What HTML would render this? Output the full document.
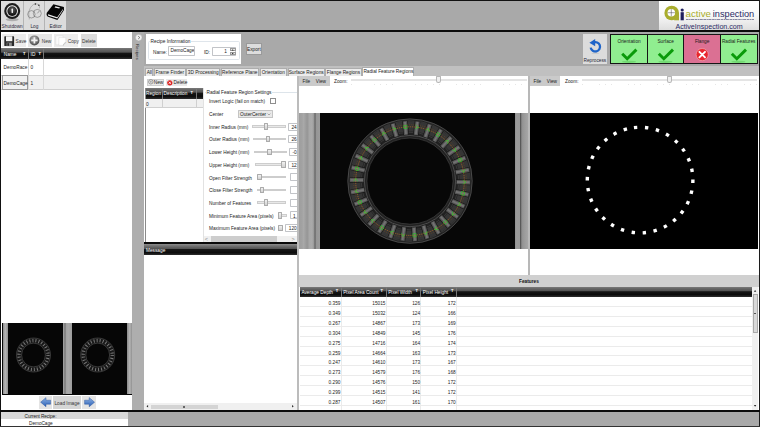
<!DOCTYPE html>
<html><head><meta charset="utf-8"><title>Recipe Editor</title>
<style>
*{box-sizing:border-box;margin:0;padding:0}
html,body{width:760px;height:427px;overflow:hidden;background:#a9a9a9}
body{position:relative;font-family:"Liberation Sans",sans-serif;font-size:4.75px;color:#1a1a1a;line-height:1.2}
div,span{position:absolute;white-space:nowrap}
.t{font-size:4.75px;line-height:6.4px;height:6.4px;margin-top:1px}
.btn{background:#dcdcdc}
.hdr{background:linear-gradient(#7a7a7a 0%,#626262 20%,#555 38%,#161616 47%,#0c0c0c 75%,#2e2e2e 100%);color:#fff}
.trk{height:2.5px;background:#e8e8e8;border:0.5px solid #cdcdcd}
.thm{width:4.6px;height:6.6px;background:linear-gradient(#f1f1f1,#d2d2d2);border:0.5px solid #ababab;border-radius:0.5px}
.tb{height:8px;background:#fff;border:0.5px solid #c2c4c8;border-radius:0.8px;font-size:4.75px;line-height:6.4px;overflow:hidden}
.tb span{left:2.4px;top:1.3px}
.tab{top:68.4px;height:7.6px;background:#ebebeb;border:0.5px solid #adadad;border-bottom:none;font-size:4.75px;line-height:7.6px;text-align:center}
.fr{position:relative;display:block;height:9.85px;border-bottom:0.5px solid #ebebeb;width:452px}
.fr span{top:0;height:9.85px;line-height:14.4px;text-align:right;padding-right:0.2px;border-right:0.5px solid #ebebeb}
.c1{left:0;width:41.6px}.c2{left:41.6px;width:45px}.c3{left:86.6px;width:34.6px}.c4{left:121.2px;width:35.6px}
.fh{top:0;height:10.4px;line-height:12.4px;color:#fff;font-size:4.75px;border-right:0.5px solid #777;padding-left:1.3px}
.flt{font-size:4px;font-weight:bold}
</style></head><body>

<!-- top toolbar -->
<div style="left:0;top:0;width:760px;height:1.2px;background:#111"></div>
<div style="left:0;top:0;width:1.2px;height:427px;background:#111"></div>
<div style="left:758.9px;top:0;width:1.1px;height:427px;background:#1c1c1c"></div>
<div class="btn" style="left:1.2px;top:1.2px;width:22px;height:29px"></div>
<div class="btn" style="left:24.4px;top:1.2px;width:20px;height:29px"></div>
<div class="btn" style="left:45.3px;top:1.2px;width:20.8px;height:29px"></div>
<div style="left:23.2px;top:1.2px;width:1.2px;height:29px;background:#b4b4b4"></div>
<div style="left:44.4px;top:1.2px;width:0.9px;height:29px;background:#b4b4b4"></div>
<!-- shutdown icon -->
<svg style="position:absolute;left:2px;top:1.5px" width="21" height="21" viewBox="0 0 21 21">
<defs><radialGradient id="g1" cx="50%" cy="35%" r="65%"><stop offset="0" stop-color="#666"/><stop offset="1" stop-color="#050505"/></radialGradient>
<linearGradient id="g2" x1="0" y1="0" x2="0" y2="1"><stop offset="0" stop-color="#fff"/><stop offset="1" stop-color="#bbb"/></linearGradient></defs>
<ellipse cx="10.2" cy="17.6" rx="6.5" ry="1.6" fill="#9a9a9a" opacity="0.7"/>
<circle cx="10.2" cy="9.1" r="8" fill="#1c1c1c"/>
<circle cx="10.2" cy="9.1" r="5.9" fill="url(#g2)"/>
<circle cx="10.2" cy="9.1" r="4.8" fill="url(#g1)"/>
<rect x="9.6" y="6.6" width="1.3" height="4.4" rx="0.6" fill="#fff"/>
</svg>
<div class="t" style="left:1.2px;top:22.8px;width:22px;text-align:center;color:#2a2a3a">Shutdown</div>
<!-- log icon -->
<svg style="position:absolute;left:25px;top:1.5px" width="19" height="21" viewBox="0 0 19 21" fill="none" stroke="#5a5a5a" stroke-width="0.5">
<circle cx="6.4" cy="12.3" r="3.7"/><circle cx="12.3" cy="11.4" r="4"/>
<path d="M4.4 16.2 C3 12 4 5.4 8.4 2.6 C10.4 1.4 13 1.8 14 3.2 C14.8 4.4 14.6 5.6 14.2 6.4" stroke="#8a8a8a" stroke-width="0.55"/>
<path d="M4.4 16.2 L4.2 17.4" stroke="#aaa" stroke-width="0.9"/>
<circle cx="10.4" cy="2.1" r="0.75" fill="#2a2a2a" stroke="none"/><circle cx="13.9" cy="3.3" r="0.75" fill="#2a2a2a" stroke="none"/>
<path d="M12.3 11.4 L14.4 9" stroke="#555"/>
</svg>
<div class="t" style="left:24.4px;top:22.8px;width:20px;text-align:center;color:#2a2a3a">Log</div>
<!-- editor icon -->
<svg style="position:absolute;left:46px;top:2.5px" width="19" height="18" viewBox="0 0 19 18">
<path d="M1 9.6 L7.4 1.3 L17.9 3.9 L18 7 L11.4 16.9 L2 13.8 C0.4 13.1 0.2 11 1 9.6 Z" fill="#050505"/>
<path d="M2.2 11.3 L11.2 14.3 L17 6 L17 7 L11.3 15.6 L2.4 12.7 C1.8 12.3 1.8 11.7 2.2 11.3 Z" fill="#ededed"/>
<path d="M9.4 3.3 L14 4.5 L13.2 5.6 L8.6 4.4 Z" fill="#f2f2f2"/>
</svg>
<div class="t" style="left:45.3px;top:22.8px;width:20.8px;text-align:center;color:#2a2a3a">Editor</div>

<!-- logo -->
<div style="left:659px;top:1.2px;width:99.8px;height:29.2px;background:linear-gradient(#ffffff 0%,#fafafa 45%,#dedede 100%)"></div>
<svg style="position:absolute;left:659px;top:1.2px" width="99" height="29" viewBox="0 0 99 29">
<circle cx="12.7" cy="12" r="7.3" fill="#a9ad2d"/>
<rect x="15.2" y="12" width="4.8" height="7.3" fill="#a9ad2d"/>
<circle cx="12.3" cy="11.7" r="3.8" fill="#fff"/>
<path d="M12.3 8.1 V15.3 M8.7 11.7 H15.9" stroke="#333" stroke-width="0.45"/>
<circle cx="23.2" cy="9" r="1.6" fill="#1e1f5e"/>
<rect x="21.6" y="11.2" width="3.2" height="8.1" fill="#1e1f5e"/>
<text x="26.6" y="15.7" font-family="Liberation Sans, sans-serif" font-size="9.4" fill="#a9ad2d" textLength="25.4" lengthAdjust="spacingAndGlyphs">active</text>
<text x="53.8" y="15.7" font-family="Liberation Sans, sans-serif" font-size="9.4" fill="#2b2c66" textLength="41.4" lengthAdjust="spacingAndGlyphs">inspection</text>
<path d="M27 18.5 H95" stroke="#4b4c74" stroke-width="0.8" stroke-dasharray="2.6 0.5 1.4 0.4 3.2 0.6" opacity="0.8"/>
<text x="16.4" y="28.2" font-family="Liberation Sans, sans-serif" font-size="7.4" fill="#2b2c66" textLength="67.4" lengthAdjust="spacingAndGlyphs">ActiveInspection.com</text>
</svg>

<!-- black line under toolbar -->
<div style="left:0;top:30.3px;width:760px;height:1.9px;background:#0c0c0c"></div>

<!-- left panel -->
<div style="left:1.2px;top:32.2px;width:131.1px;height:377.6px;background:#fff"></div>
<div class="btn" style="left:2.2px;top:33.8px;width:24px;height:13.4px;background:#ececec"></div>
<div class="btn" style="left:28px;top:33.8px;width:23.6px;height:13.4px;background:#e6e6e6"></div>
<div class="btn" style="left:54px;top:33.8px;width:24.4px;height:13.4px;background:#ececec"></div>
<div class="btn" style="left:80.8px;top:33.8px;width:16.2px;height:13.4px;background:#dcdcdc"></div>
<!-- save icon -->
<svg style="position:absolute;left:4.1px;top:35.6px" width="11" height="11" viewBox="0 0 11 11">
<rect x="0.3" y="0.3" width="9.8" height="9.8" rx="0.6" fill="#2b2b2b"/><rect x="2" y="0.3" width="6.3" height="4.9" fill="#f4f4f4"/><rect x="2.6" y="6.6" width="5.2" height="3.5" fill="#8a8a8a"/><rect x="3.4" y="7.2" width="1.5" height="2.6" fill="#222"/>
</svg>
<div class="t" style="left:15.6px;top:37.6px;color:#333">Save</div>
<svg style="position:absolute;left:29.4px;top:35.4px" width="11" height="11" viewBox="0 0 11 11">
<defs><radialGradient id="g3" cx="45%" cy="35%" r="65%"><stop offset="0" stop-color="#bbb"/><stop offset="1" stop-color="#4a4a4a"/></radialGradient></defs>
<circle cx="5.4" cy="5.4" r="5" fill="url(#g3)"/><path d="M5.4 2.2 V8.6 M2.2 5.4 H8.6" stroke="#f2f2f2" stroke-width="1.7"/>
</svg>
<div class="t" style="left:41.8px;top:37.6px;color:#333">New</div>
<svg style="position:absolute;left:55.4px;top:35.4px" width="12" height="11" viewBox="0 0 12 11">
<path d="M0.8 0.8 H8 V7 L5.4 9.8 H0.8 Z" fill="#fbfbfb" stroke="#d4d4d4" stroke-width="0.4"/><path d="M3.8 2.6 H10.8 V7.6 L8.4 10.4 H3.8 Z" fill="#fff" stroke="#cfcfcf" stroke-width="0.4"/><path d="M8.4 10.4 C8.6 9 9.4 7.8 10.8 7.6" stroke="#888" fill="none" stroke-width="0.5"/>
</svg>
<div class="t" style="left:67.8px;top:37.6px;color:#333">Copy</div>
<div class="t" style="left:80.8px;top:37.6px;width:16.2px;text-align:center;color:#333">Delete</div>
<!-- grid -->
<div class="hdr" style="left:1.2px;top:47.8px;width:131.6px;height:11.4px"></div>
<div class="t" style="left:3.8px;top:51px;color:#fff">Name</div><div class="t flt" style="left:23px;top:49.6px;color:#fff">T</div>
<div class="t" style="left:30.6px;top:51px;color:#fff">ID</div><div class="t flt" style="left:38.4px;top:49.6px;color:#fff">T</div>
<div style="left:28.2px;top:48.6px;width:0.5px;height:10.4px;background:#777"></div>
<div style="left:43.2px;top:48.6px;width:0.5px;height:10.4px;background:#777"></div>
<div style="left:1.2px;top:75px;width:131.6px;height:15.4px;background:#f0f0f0;border-top:0.5px solid #d0d0d0;border-bottom:0.5px solid #d0d0d0"></div>
<div style="left:2.4px;top:75.4px;width:25.4px;height:14.6px;border:0.5px solid #9a9a9a"></div>
<div style="left:28.2px;top:59.2px;width:0.5px;height:31.2px;background:#d8d8d8"></div>
<div style="left:43.2px;top:59.2px;width:0.5px;height:31.2px;background:#d8d8d8"></div>
<div class="t" style="left:3.6px;top:64.2px">DemoRace</div><div class="t" style="left:30.4px;top:64.2px">0</div>
<div class="t" style="left:3.6px;top:79.8px">DemoCage</div><div class="t" style="left:30.4px;top:79.8px">1</div>

<!-- thumbnails -->
<div style="left:1.6px;top:322.8px;width:131.2px;height:71.8px;background:#060606"></div>
<div style="left:2.6px;top:323.4px;width:5.8px;height:71px;background:linear-gradient(90deg,#8a8a8a,#b5b5b5 45%,#8f8f8f)"></div>
<div style="left:63.3px;top:323.4px;width:8.9px;height:71px;background:linear-gradient(90deg,#9a9a9a 0%,#a0a0a0 12%,#7c7c7c 18%,#7c7c7c 26%,#a2a2a2 34%,#a8a8a8 60%,#9c9c9c 100%)"></div>
<div style="left:126.9px;top:323.4px;width:5.3px;height:71px;background:linear-gradient(90deg,#8a8a8a,#b5b5b5 55%,#909090)"></div>
<svg style="position:absolute;left:0;top:322.8px" width="133" height="72" viewBox="0 322.8 133 72">
<circle cx="33.5" cy="354.8" r="14.4" fill="none" stroke="#171717" stroke-width="5.2"/>
<circle cx="33.5" cy="354.8" r="14.5" fill="none" stroke="#787878" stroke-width="3.3" stroke-dasharray="1.0 2.037"/>
<circle cx="33.5" cy="354.8" r="17" fill="none" stroke="#6c6c6c" stroke-width="0.45"/>
<circle cx="33.5" cy="354.8" r="11.9" fill="none" stroke="#6c6c6c" stroke-width="0.45"/>
<circle cx="97.7" cy="354.8" r="14.4" fill="none" stroke="#171717" stroke-width="5.2"/>
<circle cx="97.7" cy="354.8" r="14.5" fill="none" stroke="#787878" stroke-width="3.3" stroke-dasharray="1.0 2.037"/>
<circle cx="97.7" cy="354.8" r="17" fill="none" stroke="#6c6c6c" stroke-width="0.45"/>
<circle cx="97.7" cy="354.8" r="11.9" fill="none" stroke="#6c6c6c" stroke-width="0.45"/>
</svg>
<!-- load image -->
<div class="btn" style="left:38.6px;top:396.2px;width:13.4px;height:12.4px;background:#e4e4e4"></div>
<div class="btn" style="left:53px;top:396.2px;width:28px;height:12.4px;background:#d6d6d6"></div>
<div class="btn" style="left:82.4px;top:396.2px;width:13.4px;height:12.4px;background:#e4e4e4"></div>
<div class="t" style="left:53px;top:400.2px;width:28px;text-align:center;color:#333">Load Image</div>
<svg style="position:absolute;left:38.6px;top:396.2px" width="57.2" height="12.4" viewBox="0 0 57.2 12.4">
<defs><linearGradient id="ga" x1="0" y1="0" x2="0" y2="1"><stop offset="0" stop-color="#8fb4e6"/><stop offset="1" stop-color="#2a5fb4"/></linearGradient></defs>
<path d="M1.6 6.2 L7 1.6 V4.2 H11.6 V8.2 H7 V10.8 Z" fill="url(#ga)" stroke="#1a4796" stroke-width="0.4"/>
<path d="M55.6 6.2 L50.2 1.6 V4.2 H45.6 V8.2 H50.2 V10.8 Z" fill="url(#ga)" stroke="#1a4796" stroke-width="0.4"/>
</svg>

<!-- bottom -->
<div style="left:0;top:409.8px;width:760px;height:2px;background:#0c0c0c"></div>
<div style="left:1.2px;top:411.8px;width:126.8px;height:7px;background:#d9d9d9"></div>
<div style="left:1.2px;top:418.8px;width:126.8px;height:7.4px;background:#fff"></div>
<div style="left:0;top:426px;width:760px;height:1px;background:#333"></div>
<div class="t" style="left:24.6px;top:412.9px;color:#222;letter-spacing:-0.1px">Current Recipe:</div>
<div class="t" style="left:29px;top:419.7px;color:#222;letter-spacing:-0.05px">DemoCage</div>

<!-- splitter -->
<div style="left:132.3px;top:32.2px;width:11.9px;height:377.6px;background:#aeaeae"></div>
<svg style="position:absolute;left:134.6px;top:33.8px" width="8" height="8" viewBox="0 0 8 8"><circle cx="3.7" cy="3.6" r="3.3" fill="#f1f1f1" stroke="#9a9a9a" stroke-width="0.4"/><path d="M3.2 2.2 L4.8 3.6 L3.2 5" stroke="#444" stroke-width="0.7" fill="none"/></svg>
<div class="t" style="left:140.3px;top:42.8px;transform-origin:0 0;transform:rotate(90deg);color:#222;font-size:4.3px">Recipes</div>

<!-- recipe info -->
<div style="left:146.2px;top:34px;width:94.8px;height:29.8px;background:#fff"></div>
<div style="left:147.9px;top:41.4px;width:91.7px;height:18.4px;border:0.5px solid #dfe5eb;border-radius:1.6px"></div>
<div class="t" style="left:149.6px;top:38.2px;background:#fff;padding:0 1px">Recipe Information</div>
<div class="t" style="left:153px;top:48.6px">Name:</div>
<div class="tb" style="left:168.3px;top:46.2px;width:26.4px;height:10.2px"><span style="top:0.7px;left:1.3px;letter-spacing:-0.05px">DemoCage</span></div>
<div class="t" style="left:204px;top:48.6px">ID:</div>
<div class="tb" style="left:211.6px;top:47.4px;width:24.4px;height:8.2px"><span style="left:auto;right:8px;top:0.6px">1</span></div>
<div style="left:230.2px;top:47.8px;width:5.4px;height:3.6px;background:#e9e9e9;border:0.4px solid #9a9a9a"></div>
<div style="left:230.2px;top:51.6px;width:5.4px;height:3.6px;background:#e9e9e9;border:0.4px solid #9a9a9a"></div>
<svg style="position:absolute;left:230.2px;top:47.8px" width="5.4" height="7.4" viewBox="0 0 5.4 7.4"><path d="M1.7 2.5 L2.7 1.2 L3.7 2.5 Z M1.7 5 L2.7 6.3 L3.7 5 Z" fill="#222"/></svg>
<div style="left:245.6px;top:43.4px;width:16.6px;height:11.6px;background:#dddddd;border:0.5px solid #9a9a9a"></div>
<div class="t" style="left:245.6px;top:46px;width:16.6px;text-align:center">Export</div>

<!-- reprocess + status -->
<div class="btn" style="left:583px;top:34.4px;width:23.8px;height:29.4px"></div>
<svg style="position:absolute;left:586.6px;top:37.6px" width="16" height="16" viewBox="0 0 16 16"><path d="M6.4 4.5 A4.7 4.7 0 1 1 3.7 9.6" fill="none" stroke="#1f64c8" stroke-width="2.3"/><path d="M2.4 4.8 L8.2 1 L8.2 8.2 Z" fill="#1f64c8"/><ellipse cx="8.3" cy="15.3" rx="4" ry="0.5" fill="#c4c4c4"/></svg>
<div class="t" style="left:583px;top:57.4px;width:23.8px;text-align:center;color:#2a2a3a">Reprocess</div>
<div style="left:610px;top:33.8px;width:147.6px;height:30px;background:#161616"></div>
<div style="left:611px;top:34.7px;width:36px;height:28.2px;background:#90ee90"></div>
<div style="left:647.7px;top:34.7px;width:35.8px;height:28.2px;background:#90ee90"></div>
<div style="left:684.2px;top:34.7px;width:35.8px;height:28.2px;background:#db7093"></div>
<div style="left:720.7px;top:34.7px;width:36px;height:28.2px;background:#90ee90"></div>
<div class="t" style="left:611px;top:37.9px;width:36.2px;text-align:center">Orientation</div>
<div class="t" style="left:647.6px;top:37.9px;width:36.1px;text-align:center">Surface</div>
<div class="t" style="left:684.1px;top:37.9px;width:36.1px;text-align:center">Flange</div>
<div class="t" style="left:720.6px;top:37.9px;width:36.2px;text-align:center">Radial Features</div>
<svg style="position:absolute;left:610px;top:46px" width="148" height="18" viewBox="0 0 148 18">
<g fill="none" stroke="#0a9a0a" stroke-width="2.9"><path d="M12.2 7.8 L17.2 12.8 L26.4 3.6"/><path d="M48.8 7.8 L53.8 12.8 L63 3.6"/><path d="M121.8 7.8 L126.8 12.8 L136 3.6"/></g>
<g fill="#4fbf4f" opacity="0.45"><ellipse cx="19" cy="15.8" rx="7" ry="1.1"/><ellipse cx="55.4" cy="15.8" rx="7" ry="1.1"/><ellipse cx="128.4" cy="15.8" rx="7" ry="1.1"/></g>
<circle cx="92.2" cy="8.6" r="6.1" fill="#e8262e"/><circle cx="92.2" cy="8.6" r="6.1" fill="none" stroke="#f3a6b0" stroke-width="0.7"/>
<path d="M89.4 5.8 L95 11.4 M95 5.8 L89.4 11.4" stroke="#fff" stroke-width="1.9" stroke-linecap="round"/>
</svg>

<!-- tab strip -->
<div style="left:144.2px;top:65.7px;width:614.8px;height:10.3px;background:#c0c0c0"></div>
<div class="tab" style="left:145.4px;width:7.8px">All</div>
<div class="tab" style="left:153.8px;width:32px">Frame Finder</div>
<div class="tab" style="left:186.4px;width:33.6px">3D Processing</div>
<div class="tab" style="left:220.6px;width:38.4px">Reference Plane</div>
<div class="tab" style="left:259.6px;width:27.4px">Orientation</div>
<div class="tab" style="left:287.6px;width:37.2px">Surface Regions</div>
<div class="tab" style="left:325.4px;width:36.2px">Flange Regions</div>
<div class="tab" style="left:362.4px;width:51.8px;top:67.2px;height:9px;background:#fff;line-height:8.4px">Radial Feature Regions</div>

<!-- tab content background -->
<div style="left:144.2px;top:75.9px;width:614.8px;height:333.9px;background:#fff"></div>

<!-- region list -->
<div style="left:146.8px;top:78.6px;width:16.8px;height:7.1px;background:#e9e9e9;border:0.4px solid #cfcfcf"></div>
<div style="left:166.2px;top:78.6px;width:21px;height:7.1px;background:#e9e9e9"></div>
<svg style="position:absolute;left:147.6px;top:79.4px" width="6" height="6" viewBox="0 0 6 6"><circle cx="2.8" cy="2.8" r="2.2" fill="#f5f5f5" stroke="#555" stroke-width="0.55"/><path d="M2.8 1.5 V4.1 M1.5 2.8 H4.1" stroke="#777" stroke-width="0.5"/></svg>
<div class="t" style="left:153.8px;top:79.2px">New</div>
<svg style="position:absolute;left:167px;top:79.5px" width="6" height="6" viewBox="0 0 6 6"><circle cx="2.8" cy="2.8" r="2.6" fill="#dd2222"/><path d="M1.7 1.7 L3.9 3.9 M3.9 1.7 L1.7 3.9" stroke="#fff" stroke-width="0.8"/></svg>
<div class="t" style="left:173.6px;top:79.2px">Delete</div>
<div class="hdr" style="left:145px;top:88px;width:58px;height:11px"></div>
<div style="left:144.8px;top:88px;width:0.5px;height:154.4px;background:#8a8a8a"></div>
<div class="t" style="left:146px;top:90.4px;color:#fff">Region</div>
<div class="t" style="left:163.6px;top:90.4px;color:#fff">Description</div><div class="t flt" style="left:190.6px;top:89.2px;color:#fff">T</div>
<div style="left:162.4px;top:88.6px;width:0.5px;height:10px;background:#777"></div>
<div style="left:196.2px;top:88.6px;width:0.5px;height:10px;background:#777"></div>
<div style="left:145.4px;top:99px;width:57.6px;height:9.3px;background:#f0f0f0;border-bottom:0.5px solid #d0d0d0"></div>
<div style="left:162.4px;top:99px;width:0.5px;height:9.3px;background:#d0d0d0"></div>
<div style="left:196.2px;top:99px;width:0.5px;height:9.3px;background:#d0d0d0"></div>
<div class="t" style="left:146px;top:101px">0</div>
<div style="left:203px;top:88.2px;width:0.6px;height:154px;background:#e2e2e2"></div>

<!-- settings -->
<div style="left:205.4px;top:92.4px;width:92px;height:146px;border-top:0.5px solid #dde4ea"></div>
<div class="t" style="left:205.8px;top:88.8px;background:#fff;padding:0 0.8px;letter-spacing:-0.04px">Radial Feature Region Settings</div>
<div class="t" style="left:209px;top:98.3px">Invert Logic (fail on match)</div>
<div style="left:270px;top:97.8px;width:6.2px;height:6.2px;background:#fff;border:0.5px solid #8e8e8e"></div>
<div class="t" style="left:209px;top:110.8px">Center</div>
<div style="left:237.7px;top:109.6px;width:35.6px;height:8.4px;background:#e9e9e9;border:0.5px solid #c4c4c4;border-radius:0.5px"></div>
<div class="t" style="left:240px;top:110.8px">OuterCenter</div>
<svg style="position:absolute;left:267.4px;top:112.6px" width="4" height="3" viewBox="0 0 4 3"><path d="M0.6 0.6 L2 2 L3.4 0.6" fill="none" stroke="#666" stroke-width="0.5"/></svg>
<div class="t" style="left:209px;top:123.7px">Inner Radius (mm)</div><div class="trk" style="left:252.2px;top:125.1px;width:33.8px"></div><div class="thm" style="left:263.9px;top:123.1px"></div><div class="tb" style="left:288px;top:122.5px;width:11.0px"><span>24.</span></div><div class="t" style="left:209px;top:136.4px">Outer Radius (mm)</div><div class="trk" style="left:253.2px;top:137.8px;width:32.8px"></div><div class="thm" style="left:265.6px;top:135.8px"></div><div class="tb" style="left:288px;top:135.2px;width:11.0px"><span>26.</span></div><div class="t" style="left:209px;top:149.1px">Lower Height (mm)</div><div class="trk" style="left:254.2px;top:150.5px;width:32.4px"></div><div class="thm" style="left:267.4px;top:148.5px"></div><div class="tb" style="left:289px;top:147.9px;width:10.0px"><span>-0.</span></div><div class="t" style="left:209px;top:161.8px">Upper Height (mm)</div><div class="trk" style="left:255px;top:163.2px;width:31.0px"></div><div class="thm" style="left:281.4px;top:161.2px"></div><div class="tb" style="left:288px;top:160.6px;width:11.0px"><span>12.</span></div><div class="t" style="left:209px;top:174.5px">Open Filter Strength</div><div class="trk" style="left:256.5px;top:175.9px;width:29.5px"></div><div class="thm" style="left:257.2px;top:173.9px"></div><div class="tb" style="left:289.5px;top:173.3px;width:9.5px"><span></span></div><div class="t" style="left:209px;top:187.2px">Close Filter Strength</div><div class="trk" style="left:256.5px;top:188.6px;width:29.5px"></div><div class="thm" style="left:259.7px;top:186.6px"></div><div class="tb" style="left:289.5px;top:186.0px;width:9.5px"><span></span></div><div class="t" style="left:209px;top:199.9px">Number of Features</div><div class="trk" style="left:256.5px;top:201.3px;width:29.5px"></div><div class="thm" style="left:263.5px;top:199.3px"></div><div class="tb" style="left:289.5px;top:198.7px;width:9.5px"><span></span></div><div class="t" style="left:209px;top:212.6px">Minimum Feature Area (pixels)</div><div class="trk" style="left:277.5px;top:214.0px;width:9.5px"></div><div class="thm" style="left:277.7px;top:212.0px"></div><div class="tb" style="left:289.6px;top:211.4px;width:9.4px"><span>1,</span></div><div class="t" style="left:209px;top:225.3px">Maximum Feature Area (pixels)</div><div class="trk" style="left:279px;top:226.7px;width:4.0px"></div><div class="thm" style="left:278.1px;top:224.7px"></div><div class="tb" style="left:285.4px;top:224.1px;width:13.6px"><span>120,</span></div>
<!-- settings h-scrollbar -->
<div style="left:203.6px;top:236px;width:93.4px;height:6.4px;background:#f0f0f0"></div>
<div style="left:210.6px;top:236px;width:66.4px;height:6.4px;background:#cdcdcd"></div>
<div class="t" style="left:204.8px;top:235.2px;font-size:5.6px;color:#8a8a8a">&lt;</div>
<div class="t" style="left:291.6px;top:235.2px;font-size:5.6px;color:#8a8a8a">&gt;</div>

<!-- message panel -->
<div style="left:144.4px;top:242.4px;width:152.6px;height:2.2px;background:#0a0a0a"></div>
<div class="hdr" style="left:144.4px;top:244.4px;width:152.6px;height:11px;background:linear-gradient(#8c8c8c 0%,#686868 25%,#555 42%,#161616 50%,#0c0c0c 80%,#2e2e2e 100%)"></div>
<div class="t" style="left:146px;top:246.8px;color:#fff">Message</div>
<div style="left:144.4px;top:403.4px;width:152.8px;height:6.4px;background:#f0f0f0"></div>
<div style="left:150.6px;top:404.6px;width:67px;height:4px;background:#d4d4d4"></div>
<div style="left:183.4px;top:405.8px;width:1.6px;height:1.8px;background:#666"></div>
<svg style="position:absolute;left:144.4px;top:403.4px" width="152.8" height="6.4" viewBox="0 0 152.8 6.4"><path d="M4 2 L2.4 3.2 L4 4.4 Z M148.2 2 L149.8 3.2 L148.2 4.4 Z" fill="#222"/></svg>

<!-- vertical splitter between left column and viewers -->
<div style="left:296.9px;top:75.9px;width:2.2px;height:333.9px;background:#bcbcbc"></div>

<!-- left viewer -->
<div style="left:299.1px;top:75.9px;width:30.5px;height:10.3px;background:#cacaca"></div>
<div class="t" style="left:302.6px;top:78.4px">File</div>
<div class="t" style="left:315.8px;top:78.4px">View</div>
<div class="t" style="left:334px;top:78.4px">Zoom:</div>
<div style="left:351px;top:78.9px;width:176px;height:1.3px;background:#f1f1f1;border:0.4px solid #e4e4e4"></div>
<div style="left:351px;top:84.2px;width:176px;height:0.8px;background:repeating-linear-gradient(90deg,#e6e6e6 0 0.6px,transparent 0.6px 5.86px)"></div>
<div style="left:436.4px;top:76.3px;width:4.4px;height:6.4px;background:#f0f0f0;border:0.5px solid #b6b6b6;border-radius:0.4px 0.4px 2.2px 2.2px"></div>
<!-- left image -->
<div style="left:299px;top:112.7px;width:229px;height:136.1px;background:#070707;overflow:hidden">
<div style="left:0;top:0;width:21px;height:136.1px;background:linear-gradient(90deg,#9e9e9e 0%,#a2a2a2 14%,#a9a9a9 22%,#9a9a9a 35%,#979797 40%,#a8a8a8 50%,#aaaaaa 62%,#9c9c9c 69%,#7a7a7a 72%,#767676 79%,#959595 82%,#9b9b9b 100%)"></div>
<div style="left:215.5px;top:0;width:13.5px;height:136.1px;background:linear-gradient(90deg,#8e8e8e 0%,#9a9a9a 10%,#999 38%,#5a5a5a 41%,#555 47%,#8f8f8f 51%,#9a9a9a 70%,#a6a6a6 100%)"></div>
<svg style="position:absolute;left:0;top:0" width="229" height="136.8" viewBox="0 0 229 136.8">
<circle cx="111.0" cy="68.1" r="52.7" fill="none" stroke="#212121" stroke-width="19.4"/>
<circle cx="111.0" cy="68.1" r="54.6" fill="none" stroke="#353535" stroke-width="10"/>
<circle cx="111.0" cy="68.1" r="62.2" fill="none" stroke="#6a6a6a" stroke-width="0.55"/>
<circle cx="111.0" cy="68.1" r="60.3" fill="none" stroke="#4c4c4c" stroke-width="0.5"/>
<circle cx="111.0" cy="68.1" r="48.8" fill="none" stroke="#505050" stroke-width="0.5"/>
<circle cx="111.0" cy="68.1" r="45.6" fill="none" stroke="#5e5e5e" stroke-width="0.7"/>
<circle cx="111.0" cy="68.1" r="43.1" fill="none" stroke="#474747" stroke-width="0.6"/>
<g transform="rotate(-4.8 111.0 68.1)"><rect x="108.2" y="7.699999999999996" width="5.6" height="14.2" fill="#181818"/><rect x="108.9" y="7.999999999999993" width="4.2" height="13.6" fill="#555"/><rect x="110.0" y="8.499999999999993" width="1.9" height="12.6" fill="#727272"/></g>
<g transform="rotate(7.2 111.0 68.1)"><rect x="108.2" y="7.699999999999996" width="5.6" height="14.2" fill="#181818"/><rect x="108.9" y="7.999999999999993" width="4.2" height="13.6" fill="#555"/><rect x="110.0" y="8.499999999999993" width="1.9" height="12.6" fill="#727272"/></g>
<g transform="rotate(19.2 111.0 68.1)"><rect x="108.2" y="7.699999999999996" width="5.6" height="14.2" fill="#181818"/><rect x="108.9" y="7.999999999999993" width="4.2" height="13.6" fill="#555"/><rect x="110.0" y="8.499999999999993" width="1.9" height="12.6" fill="#727272"/></g>
<g transform="rotate(31.2 111.0 68.1)"><rect x="108.2" y="7.699999999999996" width="5.6" height="14.2" fill="#181818"/><rect x="108.9" y="7.999999999999993" width="4.2" height="13.6" fill="#555"/><rect x="110.0" y="8.499999999999993" width="1.9" height="12.6" fill="#727272"/></g>
<g transform="rotate(43.2 111.0 68.1)"><rect x="108.2" y="7.699999999999996" width="5.6" height="14.2" fill="#181818"/><rect x="108.9" y="7.999999999999993" width="4.2" height="13.6" fill="#555"/><rect x="110.0" y="8.499999999999993" width="1.9" height="12.6" fill="#727272"/></g>
<g transform="rotate(55.2 111.0 68.1)"><rect x="108.2" y="7.699999999999996" width="5.6" height="14.2" fill="#181818"/><rect x="108.9" y="7.999999999999993" width="4.2" height="13.6" fill="#555"/><rect x="110.0" y="8.499999999999993" width="1.9" height="12.6" fill="#727272"/></g>
<g transform="rotate(67.2 111.0 68.1)"><rect x="108.2" y="7.699999999999996" width="5.6" height="14.2" fill="#181818"/><rect x="108.9" y="7.999999999999993" width="4.2" height="13.6" fill="#555"/><rect x="110.0" y="8.499999999999993" width="1.9" height="12.6" fill="#727272"/></g>
<g transform="rotate(79.2 111.0 68.1)"><rect x="108.2" y="7.699999999999996" width="5.6" height="14.2" fill="#181818"/><rect x="108.9" y="7.999999999999993" width="4.2" height="13.6" fill="#555"/><rect x="110.0" y="8.499999999999993" width="1.9" height="12.6" fill="#727272"/></g>
<g transform="rotate(91.2 111.0 68.1)"><rect x="108.2" y="7.699999999999996" width="5.6" height="14.2" fill="#181818"/><rect x="108.9" y="7.999999999999993" width="4.2" height="13.6" fill="#555"/><rect x="110.0" y="8.499999999999993" width="1.9" height="12.6" fill="#727272"/></g>
<g transform="rotate(103.2 111.0 68.1)"><rect x="108.2" y="7.699999999999996" width="5.6" height="14.2" fill="#181818"/><rect x="108.9" y="7.999999999999993" width="4.2" height="13.6" fill="#555"/><rect x="110.0" y="8.499999999999993" width="1.9" height="12.6" fill="#727272"/></g>
<g transform="rotate(115.2 111.0 68.1)"><rect x="108.2" y="7.699999999999996" width="5.6" height="14.2" fill="#181818"/><rect x="108.9" y="7.999999999999993" width="4.2" height="13.6" fill="#555"/><rect x="110.0" y="8.499999999999993" width="1.9" height="12.6" fill="#727272"/></g>
<g transform="rotate(127.2 111.0 68.1)"><rect x="108.2" y="7.699999999999996" width="5.6" height="14.2" fill="#181818"/><rect x="108.9" y="7.999999999999993" width="4.2" height="13.6" fill="#555"/><rect x="110.0" y="8.499999999999993" width="1.9" height="12.6" fill="#727272"/></g>
<g transform="rotate(139.2 111.0 68.1)"><rect x="108.2" y="7.699999999999996" width="5.6" height="14.2" fill="#181818"/><rect x="108.9" y="7.999999999999993" width="4.2" height="13.6" fill="#555"/><rect x="110.0" y="8.499999999999993" width="1.9" height="12.6" fill="#727272"/></g>
<g transform="rotate(151.2 111.0 68.1)"><rect x="108.2" y="7.699999999999996" width="5.6" height="14.2" fill="#181818"/><rect x="108.9" y="7.999999999999993" width="4.2" height="13.6" fill="#555"/><rect x="110.0" y="8.499999999999993" width="1.9" height="12.6" fill="#727272"/></g>
<g transform="rotate(163.2 111.0 68.1)"><rect x="108.2" y="7.699999999999996" width="5.6" height="14.2" fill="#181818"/><rect x="108.9" y="7.999999999999993" width="4.2" height="13.6" fill="#555"/><rect x="110.0" y="8.499999999999993" width="1.9" height="12.6" fill="#727272"/></g>
<g transform="rotate(175.2 111.0 68.1)"><rect x="108.2" y="7.699999999999996" width="5.6" height="14.2" fill="#181818"/><rect x="108.9" y="7.999999999999993" width="4.2" height="13.6" fill="#555"/><rect x="110.0" y="8.499999999999993" width="1.9" height="12.6" fill="#727272"/></g>
<g transform="rotate(187.2 111.0 68.1)"><rect x="108.2" y="7.699999999999996" width="5.6" height="14.2" fill="#181818"/><rect x="108.9" y="7.999999999999993" width="4.2" height="13.6" fill="#555"/><rect x="110.0" y="8.499999999999993" width="1.9" height="12.6" fill="#727272"/></g>
<g transform="rotate(199.2 111.0 68.1)"><rect x="108.2" y="7.699999999999996" width="5.6" height="14.2" fill="#181818"/><rect x="108.9" y="7.999999999999993" width="4.2" height="13.6" fill="#555"/><rect x="110.0" y="8.499999999999993" width="1.9" height="12.6" fill="#727272"/></g>
<g transform="rotate(211.2 111.0 68.1)"><rect x="108.2" y="7.699999999999996" width="5.6" height="14.2" fill="#181818"/><rect x="108.9" y="7.999999999999993" width="4.2" height="13.6" fill="#555"/><rect x="110.0" y="8.499999999999993" width="1.9" height="12.6" fill="#727272"/></g>
<g transform="rotate(223.2 111.0 68.1)"><rect x="108.2" y="7.699999999999996" width="5.6" height="14.2" fill="#181818"/><rect x="108.9" y="7.999999999999993" width="4.2" height="13.6" fill="#555"/><rect x="110.0" y="8.499999999999993" width="1.9" height="12.6" fill="#727272"/></g>
<g transform="rotate(235.2 111.0 68.1)"><rect x="108.2" y="7.699999999999996" width="5.6" height="14.2" fill="#181818"/><rect x="108.9" y="7.999999999999993" width="4.2" height="13.6" fill="#555"/><rect x="110.0" y="8.499999999999993" width="1.9" height="12.6" fill="#727272"/></g>
<g transform="rotate(247.2 111.0 68.1)"><rect x="108.2" y="7.699999999999996" width="5.6" height="14.2" fill="#181818"/><rect x="108.9" y="7.999999999999993" width="4.2" height="13.6" fill="#555"/><rect x="110.0" y="8.499999999999993" width="1.9" height="12.6" fill="#727272"/></g>
<g transform="rotate(259.2 111.0 68.1)"><rect x="108.2" y="7.699999999999996" width="5.6" height="14.2" fill="#181818"/><rect x="108.9" y="7.999999999999993" width="4.2" height="13.6" fill="#555"/><rect x="110.0" y="8.499999999999993" width="1.9" height="12.6" fill="#727272"/></g>
<g transform="rotate(271.2 111.0 68.1)"><rect x="108.2" y="7.699999999999996" width="5.6" height="14.2" fill="#181818"/><rect x="108.9" y="7.999999999999993" width="4.2" height="13.6" fill="#555"/><rect x="110.0" y="8.499999999999993" width="1.9" height="12.6" fill="#727272"/></g>
<g transform="rotate(283.2 111.0 68.1)"><rect x="108.2" y="7.699999999999996" width="5.6" height="14.2" fill="#181818"/><rect x="108.9" y="7.999999999999993" width="4.2" height="13.6" fill="#555"/><rect x="110.0" y="8.499999999999993" width="1.9" height="12.6" fill="#727272"/></g>
<g transform="rotate(295.2 111.0 68.1)"><rect x="108.2" y="7.699999999999996" width="5.6" height="14.2" fill="#181818"/><rect x="108.9" y="7.999999999999993" width="4.2" height="13.6" fill="#555"/><rect x="110.0" y="8.499999999999993" width="1.9" height="12.6" fill="#727272"/></g>
<g transform="rotate(307.2 111.0 68.1)"><rect x="108.2" y="7.699999999999996" width="5.6" height="14.2" fill="#181818"/><rect x="108.9" y="7.999999999999993" width="4.2" height="13.6" fill="#555"/><rect x="110.0" y="8.499999999999993" width="1.9" height="12.6" fill="#727272"/></g>
<g transform="rotate(319.2 111.0 68.1)"><rect x="108.2" y="7.699999999999996" width="5.6" height="14.2" fill="#181818"/><rect x="108.9" y="7.999999999999993" width="4.2" height="13.6" fill="#555"/><rect x="110.0" y="8.499999999999993" width="1.9" height="12.6" fill="#727272"/></g>
<g transform="rotate(331.2 111.0 68.1)"><rect x="108.2" y="7.699999999999996" width="5.6" height="14.2" fill="#181818"/><rect x="108.9" y="7.999999999999993" width="4.2" height="13.6" fill="#555"/><rect x="110.0" y="8.499999999999993" width="1.9" height="12.6" fill="#727272"/></g>
<g transform="rotate(343.2 111.0 68.1)"><rect x="108.2" y="7.699999999999996" width="5.6" height="14.2" fill="#181818"/><rect x="108.9" y="7.999999999999993" width="4.2" height="13.6" fill="#555"/><rect x="110.0" y="8.499999999999993" width="1.9" height="12.6" fill="#727272"/></g>
<circle cx="111.0" cy="68.1" r="54.3" fill="none" stroke="#dc7c1c" stroke-width="0.55" stroke-dasharray="1.3 0.9"/>
<circle cx="111.0" cy="68.1" r="56.3" fill="none" stroke="#a85c10" stroke-width="0.35" stroke-dasharray="1 1.2"/>
<rect x="104.86" y="12.39" width="3.2" height="3.2" fill="none" stroke="#22d422" stroke-width="0.55" transform="rotate(-4.8 106.46 13.99)"/>
<path d="M115.91 15.73 L117.81 12.53 L119.71 15.73" fill="none" stroke="#22d422" stroke-width="0.55" transform="rotate(97.2 117.81 14.23)"/>
<path d="M126.96 18.32 L128.86 15.12 L130.76 18.32" fill="none" stroke="#22d422" stroke-width="0.55" transform="rotate(19.2 128.86 16.82)"/>
<rect x="137.53" y="20.05" width="3.2" height="3.2" fill="none" stroke="#22d422" stroke-width="0.55" transform="rotate(31.2 139.13 21.65)"/>
<path d="M146.27 30.02 L148.17 26.82 L150.07 30.02" fill="none" stroke="#22d422" stroke-width="0.55" transform="rotate(43.2 148.17 28.52)"/>
<path d="M153.69 38.61 L155.59 35.41 L157.49 38.61" fill="none" stroke="#22d422" stroke-width="0.55" transform="rotate(145.2 155.59 37.11)"/>
<rect x="159.46" y="45.46" width="3.2" height="3.2" fill="none" stroke="#22d422" stroke-width="0.55" transform="rotate(67.2 161.06 47.06)"/>
<path d="M162.44 59.43 L164.34 56.23 L166.24 59.43" fill="none" stroke="#22d422" stroke-width="0.55" transform="rotate(169.2 164.34 57.93)"/>
<path d="M163.39 70.74 L165.29 67.54 L167.19 70.74" fill="none" stroke="#22d422" stroke-width="0.55" transform="rotate(91.2 165.29 69.24)"/>
<rect x="162.27" y="78.90" width="3.2" height="3.2" fill="none" stroke="#22d422" stroke-width="0.55" transform="rotate(103.2 163.87 80.50)"/>
<path d="M158.23 92.72 L160.13 89.52 L162.03 92.72" fill="none" stroke="#22d422" stroke-width="0.55" transform="rotate(115.2 160.13 91.22)"/>
<path d="M152.35 102.43 L154.25 99.23 L156.15 102.43" fill="none" stroke="#22d422" stroke-width="0.55" transform="rotate(217.2 154.25 100.93)"/>
<rect x="144.88" y="107.60" width="3.2" height="3.2" fill="none" stroke="#22d422" stroke-width="0.55" transform="rotate(139.2 146.48 109.20)"/>
<path d="M135.26 117.18 L137.16 113.98 L139.06 117.18" fill="none" stroke="#22d422" stroke-width="0.55" transform="rotate(241.2 137.16 115.68)"/>
<path d="M124.79 121.58 L126.69 118.38 L128.59 121.58" fill="none" stroke="#22d422" stroke-width="0.55" transform="rotate(163.2 126.69 120.08)"/>
<rect x="113.94" y="120.61" width="3.2" height="3.2" fill="none" stroke="#22d422" stroke-width="0.55" transform="rotate(175.2 115.54 122.21)"/>
<path d="M102.29 123.47 L104.19 120.27 L106.09 123.47" fill="none" stroke="#22d422" stroke-width="0.55" transform="rotate(187.2 104.19 121.97)"/>
<path d="M91.24 120.88 L93.14 117.68 L95.04 120.88" fill="none" stroke="#22d422" stroke-width="0.55" transform="rotate(289.2 93.14 119.38)"/>
<rect x="81.27" y="112.95" width="3.2" height="3.2" fill="none" stroke="#22d422" stroke-width="0.55" transform="rotate(211.2 82.87 114.55)"/>
<path d="M71.93 109.18 L73.83 105.98 L75.73 109.18" fill="none" stroke="#22d422" stroke-width="0.55" transform="rotate(313.2 73.83 107.68)"/>
<path d="M64.51 100.59 L66.41 97.39 L68.31 100.59" fill="none" stroke="#22d422" stroke-width="0.55" transform="rotate(235.2 66.41 99.09)"/>
<rect x="59.34" y="87.54" width="3.2" height="3.2" fill="none" stroke="#22d422" stroke-width="0.55" transform="rotate(247.2 60.94 89.14)"/>
<path d="M55.76 79.77 L57.66 76.57 L59.56 79.77" fill="none" stroke="#22d422" stroke-width="0.55" transform="rotate(259.2 57.66 78.27)"/>
<path d="M54.81 68.46 L56.71 65.26 L58.61 68.46" fill="none" stroke="#22d422" stroke-width="0.55" transform="rotate(361.2 56.71 66.96)"/>
<rect x="56.53" y="54.10" width="3.2" height="3.2" fill="none" stroke="#22d422" stroke-width="0.55" transform="rotate(283.2 58.13 55.70)"/>
<path d="M59.97 46.48 L61.87 43.28 L63.77 46.48" fill="none" stroke="#22d422" stroke-width="0.55" transform="rotate(385.2 61.87 44.98)"/>
<path d="M65.85 36.77 L67.75 33.57 L69.65 36.77" fill="none" stroke="#22d422" stroke-width="0.55" transform="rotate(307.2 67.75 35.27)"/>
<rect x="73.92" y="25.40" width="3.2" height="3.2" fill="none" stroke="#22d422" stroke-width="0.55" transform="rotate(319.2 75.52 27.00)"/>
<path d="M82.94 22.02 L84.84 18.82 L86.74 22.02" fill="none" stroke="#22d422" stroke-width="0.55" transform="rotate(331.2 84.84 20.52)"/>
<path d="M93.41 17.62 L95.31 14.42 L97.21 17.62" fill="none" stroke="#22d422" stroke-width="0.55" transform="rotate(433.2 95.31 16.12)"/>
</svg>
</div>

<!-- middle splitter -->
<div style="left:528.1px;top:75.9px;width:1.9px;height:199.4px;background:#b8b8b8"></div>

<!-- right viewer -->
<div style="left:530px;top:75.9px;width:30.4px;height:10.3px;background:#cacaca"></div>
<div class="t" style="left:533.6px;top:78.4px">File</div>
<div class="t" style="left:546.8px;top:78.4px">View</div>
<div class="t" style="left:565px;top:78.4px">Zoom:</div>
<div style="left:582px;top:78.9px;width:175px;height:1.3px;background:#f1f1f1;border:0.4px solid #e4e4e4"></div>
<div style="left:582px;top:84.2px;width:175px;height:0.8px;background:repeating-linear-gradient(90deg,#e6e6e6 0 0.6px,transparent 0.6px 5.8px)"></div>
<div style="left:667.4px;top:76.3px;width:4.4px;height:6.4px;background:#f0f0f0;border:0.5px solid #b6b6b6;border-radius:0.4px 0.4px 2.2px 2.2px"></div>
<div style="left:530px;top:112.7px;width:228.4px;height:136.1px;background:#000"></div>
<svg style="position:absolute;left:530.6px;top:112.2px" width="227.8" height="137.2" viewBox="530.6 112.2 227.8 137.2">
<circle cx="639.7" cy="180.3" r="52.8" fill="none" stroke="#fff" stroke-width="3.4" stroke-dasharray="3.4 7.658" transform="rotate(-96.7 639.7 180.3)"/>
</svg>

<!-- features -->
<div style="left:299.1px;top:275.2px;width:459.6px;height:11.6px;background:#d0d0d0"></div>
<div class="t" style="left:299.6px;top:277.8px;width:458.8px;text-align:center;font-weight:bold;color:#111">Features</div>
<div class="hdr" style="left:300.1px;top:286.8px;width:452.3px;height:10.6px">
<span class="fh" style="left:0;width:41.8px">Average Depth<span class="flt" style="left:35.6px;top:-1.6px">T</span></span>
<span class="fh" style="left:41.8px;width:45px">Pixel Area Count<span class="flt" style="left:38.6px;top:-1.6px">T</span></span>
<span class="fh" style="left:86.8px;width:34.6px">Pixel Width<span class="flt" style="left:28.6px;top:-1.6px">T</span></span>
<span class="fh" style="left:121.4px;width:35.6px">Pixel Height<span class="flt" style="left:29.6px;top:-1.6px">T</span></span>
</div>
<div style="left:300.1px;top:297.4px;width:452.3px;height:112.4px;overflow:hidden;background:#fff"><div class="fr"><span class="c1">0.359</span><span class="c2">15015</span><span class="c3">126</span><span class="c4">172</span></div><div class="fr"><span class="c1">0.349</span><span class="c2">15032</span><span class="c3">124</span><span class="c4">166</span></div><div class="fr"><span class="c1">0.267</span><span class="c2">14867</span><span class="c3">173</span><span class="c4">169</span></div><div class="fr"><span class="c1">0.304</span><span class="c2">14849</span><span class="c3">145</span><span class="c4">176</span></div><div class="fr"><span class="c1">0.275</span><span class="c2">14716</span><span class="c3">164</span><span class="c4">174</span></div><div class="fr"><span class="c1">0.259</span><span class="c2">14664</span><span class="c3">163</span><span class="c4">173</span></div><div class="fr"><span class="c1">0.247</span><span class="c2">14610</span><span class="c3">173</span><span class="c4">167</span></div><div class="fr"><span class="c1">0.273</span><span class="c2">14579</span><span class="c3">176</span><span class="c4">168</span></div><div class="fr"><span class="c1">0.290</span><span class="c2">14576</span><span class="c3">150</span><span class="c4">172</span></div><div class="fr"><span class="c1">0.299</span><span class="c2">14515</span><span class="c3">141</span><span class="c4">172</span></div><div class="fr"><span class="c1">0.287</span><span class="c2">14507</span><span class="c3">161</span><span class="c4">170</span></div><div class="fr"><span class="c1"></span><span class="c2"></span><span class="c3"></span><span class="c4"></span></div></div>
<!-- v scrollbar -->
<div style="left:752.2px;top:287px;width:6.2px;height:122.8px;background:#f0f0f0"></div>
<div style="left:753px;top:294px;width:4.6px;height:39px;background:#d8d8d8;border:0.4px solid #a8a8a8"></div>
<div style="left:754.4px;top:312.6px;width:1.8px;height:1.6px;background:#555"></div>
<svg style="position:absolute;left:752.2px;top:287px" width="6.2" height="122.8" viewBox="0 0 6.2 122.8"><path d="M1.9 4.6 L3.1 3 L4.3 4.6 Z M1.9 118.2 L3.1 119.8 L4.3 118.2 Z" fill="#222"/></svg>

</body></html>
